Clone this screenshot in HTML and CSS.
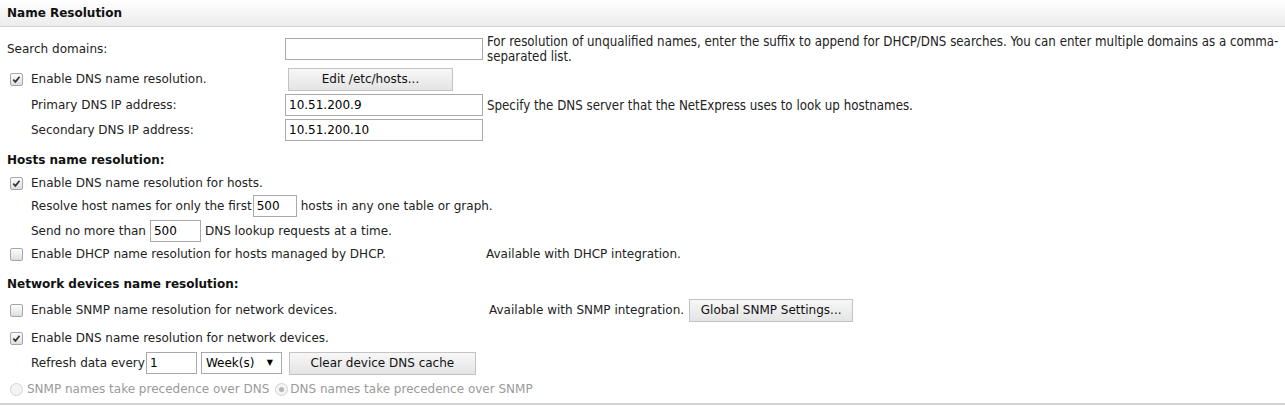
FILE: index.html
```html
<!doctype html>
<html lang="en">
  <head>
    <meta charset="utf-8"/>
    <title>Name Resolution</title>
    <link rel="stylesheet" href="styles.css">
  </head>
  <body>
    <div id="wrapper">
      <div class="hdr">Name Resolution</div>

      <div class="row r1">
        <span class="lbl">Search domains:</span>
        <span class="txt w198"></span>
        <span class="help">For resolution of unqualified names, enter the suffix to append for DHCP/DNS searches. You can enter multiple domains as a comma-<br>separated list.</span>
      </div>

      <div class="row r2">
        <span class="lbl"><span class="cb"><svg viewBox="0 0 11 11"><path d="M2.3 5.6 L4.4 7.9 L8.6 2.8"/></svg></span><span>Enable DNS name resolution.</span></span>
        <span class="btn w165">Edit /etc/hosts...</span>
      </div>

      <div class="row r3 sub">
        <span class="lbl">Primary DNS IP address:</span>
        <span class="txt w198">10.51.200.9</span>
        <span class="help one">Specify the DNS server that the NetExpress uses to look up hostnames.</span>
      </div>

      <div class="row r4 sub">
        <span class="lbl">Secondary DNS IP address:</span>
        <span class="txt w198">10.51.200.10</span>
      </div>

      <div class="row h1 head"><span>Hosts name resolution:</span></div>

      <div class="row r6">
        <span class="cb"><svg viewBox="0 0 11 11"><path d="M2.3 5.6 L4.4 7.9 L8.6 2.8"/></svg></span><span>Enable DNS name resolution for hosts.</span>
      </div>

      <div class="row r7 sub">
        <span>Resolve host names for only the first</span><span class="txt w44 mid">500</span><span>hosts in any one table or graph.</span>
      </div>

      <div class="row r8 sub">
        <span>Send no more than</span><span class="txt w51 mid3">500</span><span>DNS lookup requests at a time.</span>
      </div>

      <div class="row r9">
        <span class="lbl wide"><span class="cb"></span><span>Enable DHCP name resolution for hosts managed by DHCP.</span></span>
        <span>Available with DHCP integration.</span>
      </div>

      <div class="row h2 head"><span>Network devices name resolution:</span></div>

      <div class="row r11">
        <span class="lbl wider"><span class="cb"></span><span>Enable SNMP name resolution for network devices.</span></span>
        <span>Available with SNMP integration.</span>
        <span class="btn w164 gap">Global SNMP Settings...</span>
      </div>

      <div class="row r12">
        <span class="cb"><svg viewBox="0 0 11 11"><path d="M2.3 5.6 L4.4 7.9 L8.6 2.8"/></svg></span><span>Enable DNS name resolution for network devices.</span>
      </div>

      <div class="row r13 sub">
        <span>Refresh data every</span><span class="txt w51 mid2">1</span><span class="sel">Week(s)<span class="arr">&#9660;</span></span><span class="btn w187 gap2">Clear device DNS cache</span>
      </div>

      <div class="row r14 dis">
        <span class="rd"></span><span>SNMP names take precedence over DNS</span><span class="rd sel2"></span><span>DNS names take precedence over SNMP</span>
      </div>

      <div class="foot"></div>
    </div>
  </body>
</html>
```

FILE: styles.css
```css
/* page */
body{
  margin: 0;
  font-family: "DejaVu Sans", Verdana, sans-serif;
  font-size: 12px;
  color: #222;
  background: #fff;
}
#wrapper{
  width: 1285px;
}
/* title bar */
.hdr{
  height: 26px;
  line-height: 26px;
  padding-left: 7px;
  font-weight: bold;
  color: #111;
  border-bottom: 1px solid #d3d3d3;
  background: linear-gradient(#ffffff, #ececec);
}
/* rows */
.row{
  display: flex;
  align-items: center;
  height: 22px;
  padding-left: 7px;
  white-space: nowrap;
}
.sub{
  padding-left: 31px;
}
.head{
  font-weight: bold;
  color: #111;
}
.r1{ margin-top: 11px; }
.r2{ margin-top: 8px; }
.r3{ margin-top: 4px; }
.r4{ margin-top: 3px; }
.h1{ margin-top: 8px; }
.r6{ margin-top: 1px; }
.r7{ margin-top: 1px; }
.r8{ margin-top: 3px; }
.r9{ margin-top: 1px; }
.h2{ margin-top: 8px; }
.r11{ margin-top: 4px; }
.r12{ margin-top: 6px; }
.r13{ margin-top: 3px; }
.r14{ margin-top: 4px; }

.lbl{
  display: flex;
  align-items: center;
  width: 278px;
  flex: none;
}
.sub .lbl{
  width: 254px;
}
.lbl.wide{ width: 479px; }
.lbl.wider{ width: 482px; }

/* text inputs */
.txt{
  display: inline-block;
  box-sizing: border-box;
  height: 22px;
  line-height: 20px;
  padding: 0 3px;
  border: 1px solid #a9a9a9;
  background: #fff;
  color: #000;
  flex: none;
}
.w198{ width: 198px; }
.w44{ width: 44px; }
.w51{ width: 51px; }
.txt.mid{ margin: 0 4px 0 1px; }
.txt.mid2{ margin: 0 4px 0 1px; }
.txt.mid3{ margin: 0 4px; }

.help{
  font-family: "DejaVu Sans Condensed", "Liberation Sans", sans-serif;
  font-size: 13.2px;
  margin-left: 4px;
  line-height: 15px;
  white-space: normal;
  width: 795px;
}
.help.one{
  white-space: nowrap;
}

/* buttons */
.btn{
  display: inline-flex;
  align-items: center;
  justify-content: center;
  box-sizing: border-box;
  height: 23px;
  margin-left: 3px;
  border: 1px solid #c3c3c3;
  background: linear-gradient(#f7f7f7, #e4e4e4);
  color: #111;
  flex: none;
}
.w165{ width: 165px; }
.w164{ width: 164px; }
.w187{ width: 187px; }
.btn.gap{ margin-left: 5px; }
.btn.gap2{ margin-left: 7px; }

/* select */
.sel{
  display: inline-flex;
  align-items: center;
  box-sizing: border-box;
  width: 81px;
  height: 22px;
  padding-left: 4px;
  border: 1px solid #a9a9a9;
  color: #000;
  position: relative;
  flex: none;
}
.arr{
  position: absolute;
  right: 8px;
  top: 6px;
  font-size: 8px;
  line-height: 8px;
}

/* checkbox */
.cb{
  display: inline-block;
  box-sizing: border-box;
  width: 13px;
  height: 13px;
  margin: 0 8px 0 3px;
  border: 1px solid #a6a6a6;
  border-radius: 2px;
  background: linear-gradient(#fdfdfd, #dedede);
  flex: none;
}
.cb svg{
  display: block;
  width: 11px;
  height: 11px;
}
.cb path{
  fill: none;
  stroke: #333;
  stroke-width: 1.7;
}

/* radios */
.dis{
  color: #9a9a9a;
}
.rd{
  display: inline-block;
  box-sizing: border-box;
  width: 13px;
  height: 13px;
  margin: 0 4px 0 3px;
  border: 1px solid #d2d2d2;
  border-radius: 50%;
  background: #f4f4f4;
  flex: none;
  position: relative;
}
.rd.sel2{
  margin-left: 6px;
  margin-right: 2px;
}
.rd.sel2::after{
  content: "";
  position: absolute;
  left: 3px;
  top: 3px;
  width: 5px;
  height: 5px;
  border-radius: 50%;
  background: #b5b5b5;
}

.foot{
  margin-top: 3px;
  border-bottom: 2px solid #d3d3d3;
}
```
